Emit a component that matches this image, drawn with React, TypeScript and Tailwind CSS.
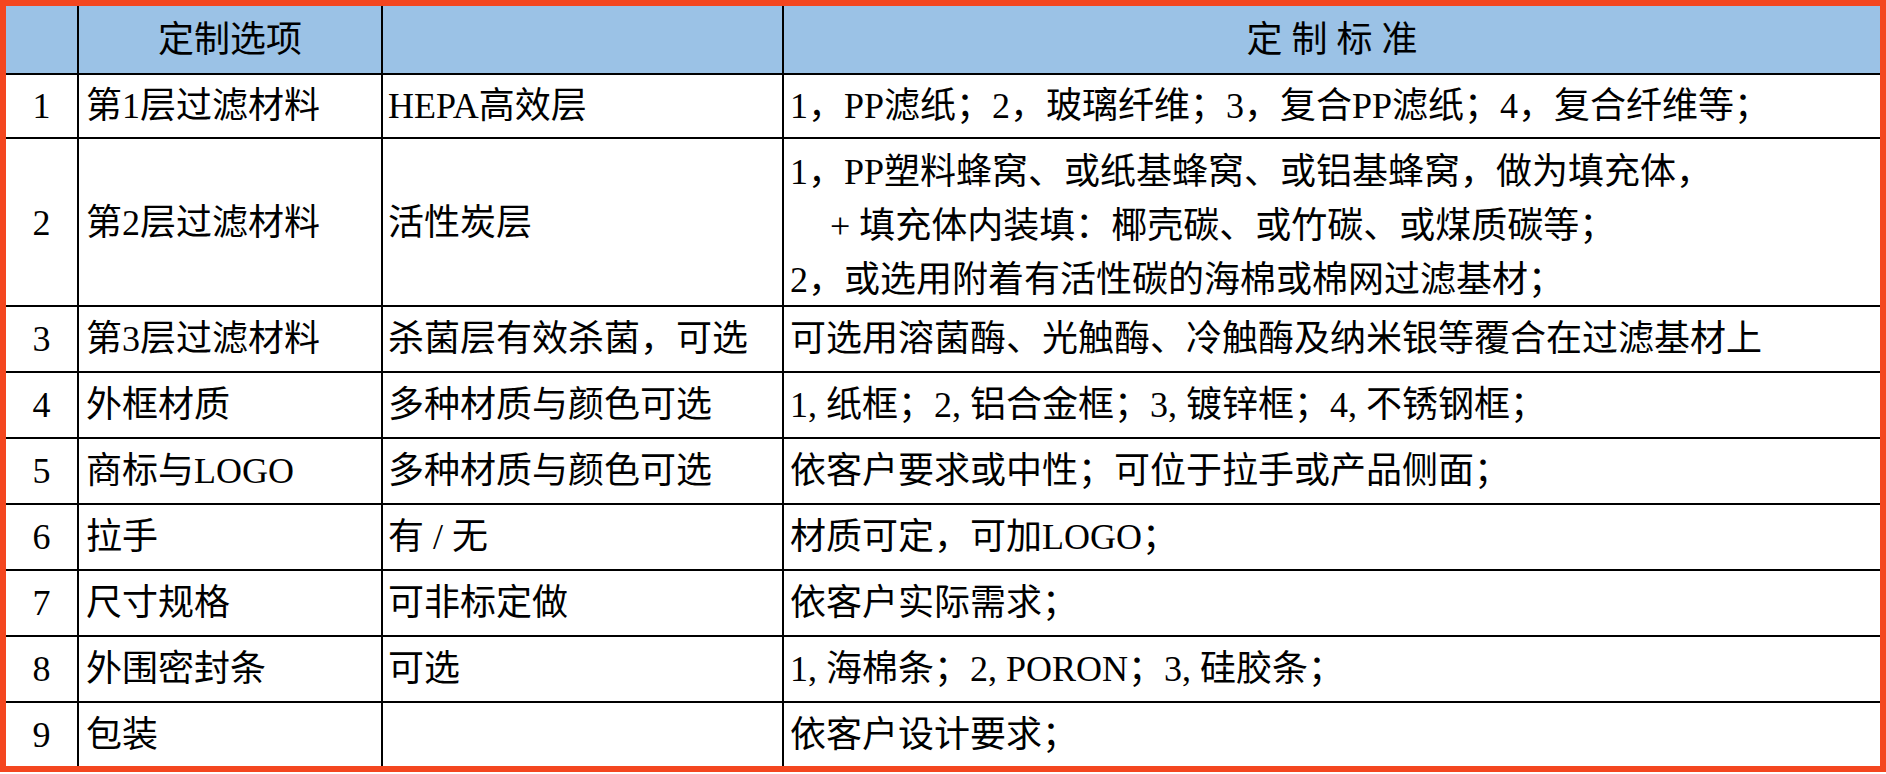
import React from "react";

type Row = {
  n: string;
  a: string;
  b: string;
  c: React.ReactNode;
  h: string;
};

const rows: Row[] = [
  {
    n: "1",
    a: "第1层过滤材料",
    b: "HEPA高效层",
    c: "1，PP滤纸；2，玻璃纤维；3，复合PP滤纸；4，复合纤维等；",
    h: "h-[64px]",
  },
  {
    n: "2",
    a: "第2层过滤材料",
    b: "活性炭层",
    c: (
      <div className="flex flex-col leading-[54px] pt-[6px]">
        <span>1，PP塑料蜂窝、或纸基蜂窝、或铝基蜂窝，做为填充体，</span>
        <span className="pl-[40px]">+ 填充体内装填：椰壳碳、或竹碳、或煤质碳等；</span>
        <span>2，或选用附着有活性碳的海棉或棉网过滤基材；</span>
      </div>
    ),
    h: "h-[168px]",
  },
  {
    n: "3",
    a: "第3层过滤材料",
    b: "杀菌层有效杀菌，可选",
    c: "可选用溶菌酶、光触酶、冷触酶及纳米银等覆合在过滤基材上",
    h: "h-[66px]",
  },
  {
    n: "4",
    a: "外框材质",
    b: "多种材质与颜色可选",
    c: "1, 纸框；2, 铝合金框；3, 镀锌框；4, 不锈钢框；",
    h: "h-[66px]",
  },
  {
    n: "5",
    a: "商标与LOGO",
    b: "多种材质与颜色可选",
    c: "依客户要求或中性；可位于拉手或产品侧面；",
    h: "h-[66px]",
  },
  {
    n: "6",
    a: "拉手",
    b: "有 / 无",
    c: "材质可定，可加LOGO；",
    h: "h-[66px]",
  },
  {
    n: "7",
    a: "尺寸规格",
    b: "可非标定做",
    c: "依客户实际需求；",
    h: "h-[66px]",
  },
  {
    n: "8",
    a: "外围密封条",
    b: "可选",
    c: "1, 海棉条；2, PORON；3, 硅胶条；",
    h: "h-[66px]",
  },
  {
    n: "9",
    a: "包装",
    b: "",
    c: "依客户设计要求；",
    h: "h-[63px]",
  },
];

export default function App() {
  return (
    <div className="w-[1886px] h-[774px] bg-white font-['Liberation_Serif','Noto_Sans_CJK_SC',serif] text-[36px] text-black">
      <div className="w-[1886px] h-[772px] border-[6px] border-[#f4461f] flex flex-col overflow-hidden">
        {/* header */}
        <div className="grid grid-cols-[73px_304px_401px_1fr] h-[69px] border-b-2 border-black bg-[#9bc2e6] shrink-0">
          <div className="border-r-2 border-black" />
          <div className="border-r-2 border-black flex items-center justify-center">定制选项</div>
          <div className="border-r-2 border-black" />
          <div className="flex items-center justify-center">定 制 标 准</div>
        </div>
        {rows.map((r, i) => (
          <div
            key={r.n}
            className={`grid grid-cols-[73px_304px_401px_1fr] shrink-0 ${r.h} ${
              i < rows.length - 1 ? "border-b-2 border-black" : ""
            }`}
          >
            <div className="border-r-2 border-black flex items-center justify-center">{r.n}</div>
            <div className="border-r-2 border-black flex items-center pl-[7px] whitespace-nowrap">{r.a}</div>
            <div className="border-r-2 border-black flex items-center pl-[5px] whitespace-nowrap">{r.b}</div>
            <div className="flex items-center pl-[6px] whitespace-nowrap">{r.c}</div>
          </div>
        ))}
      </div>
    </div>
  );
}
